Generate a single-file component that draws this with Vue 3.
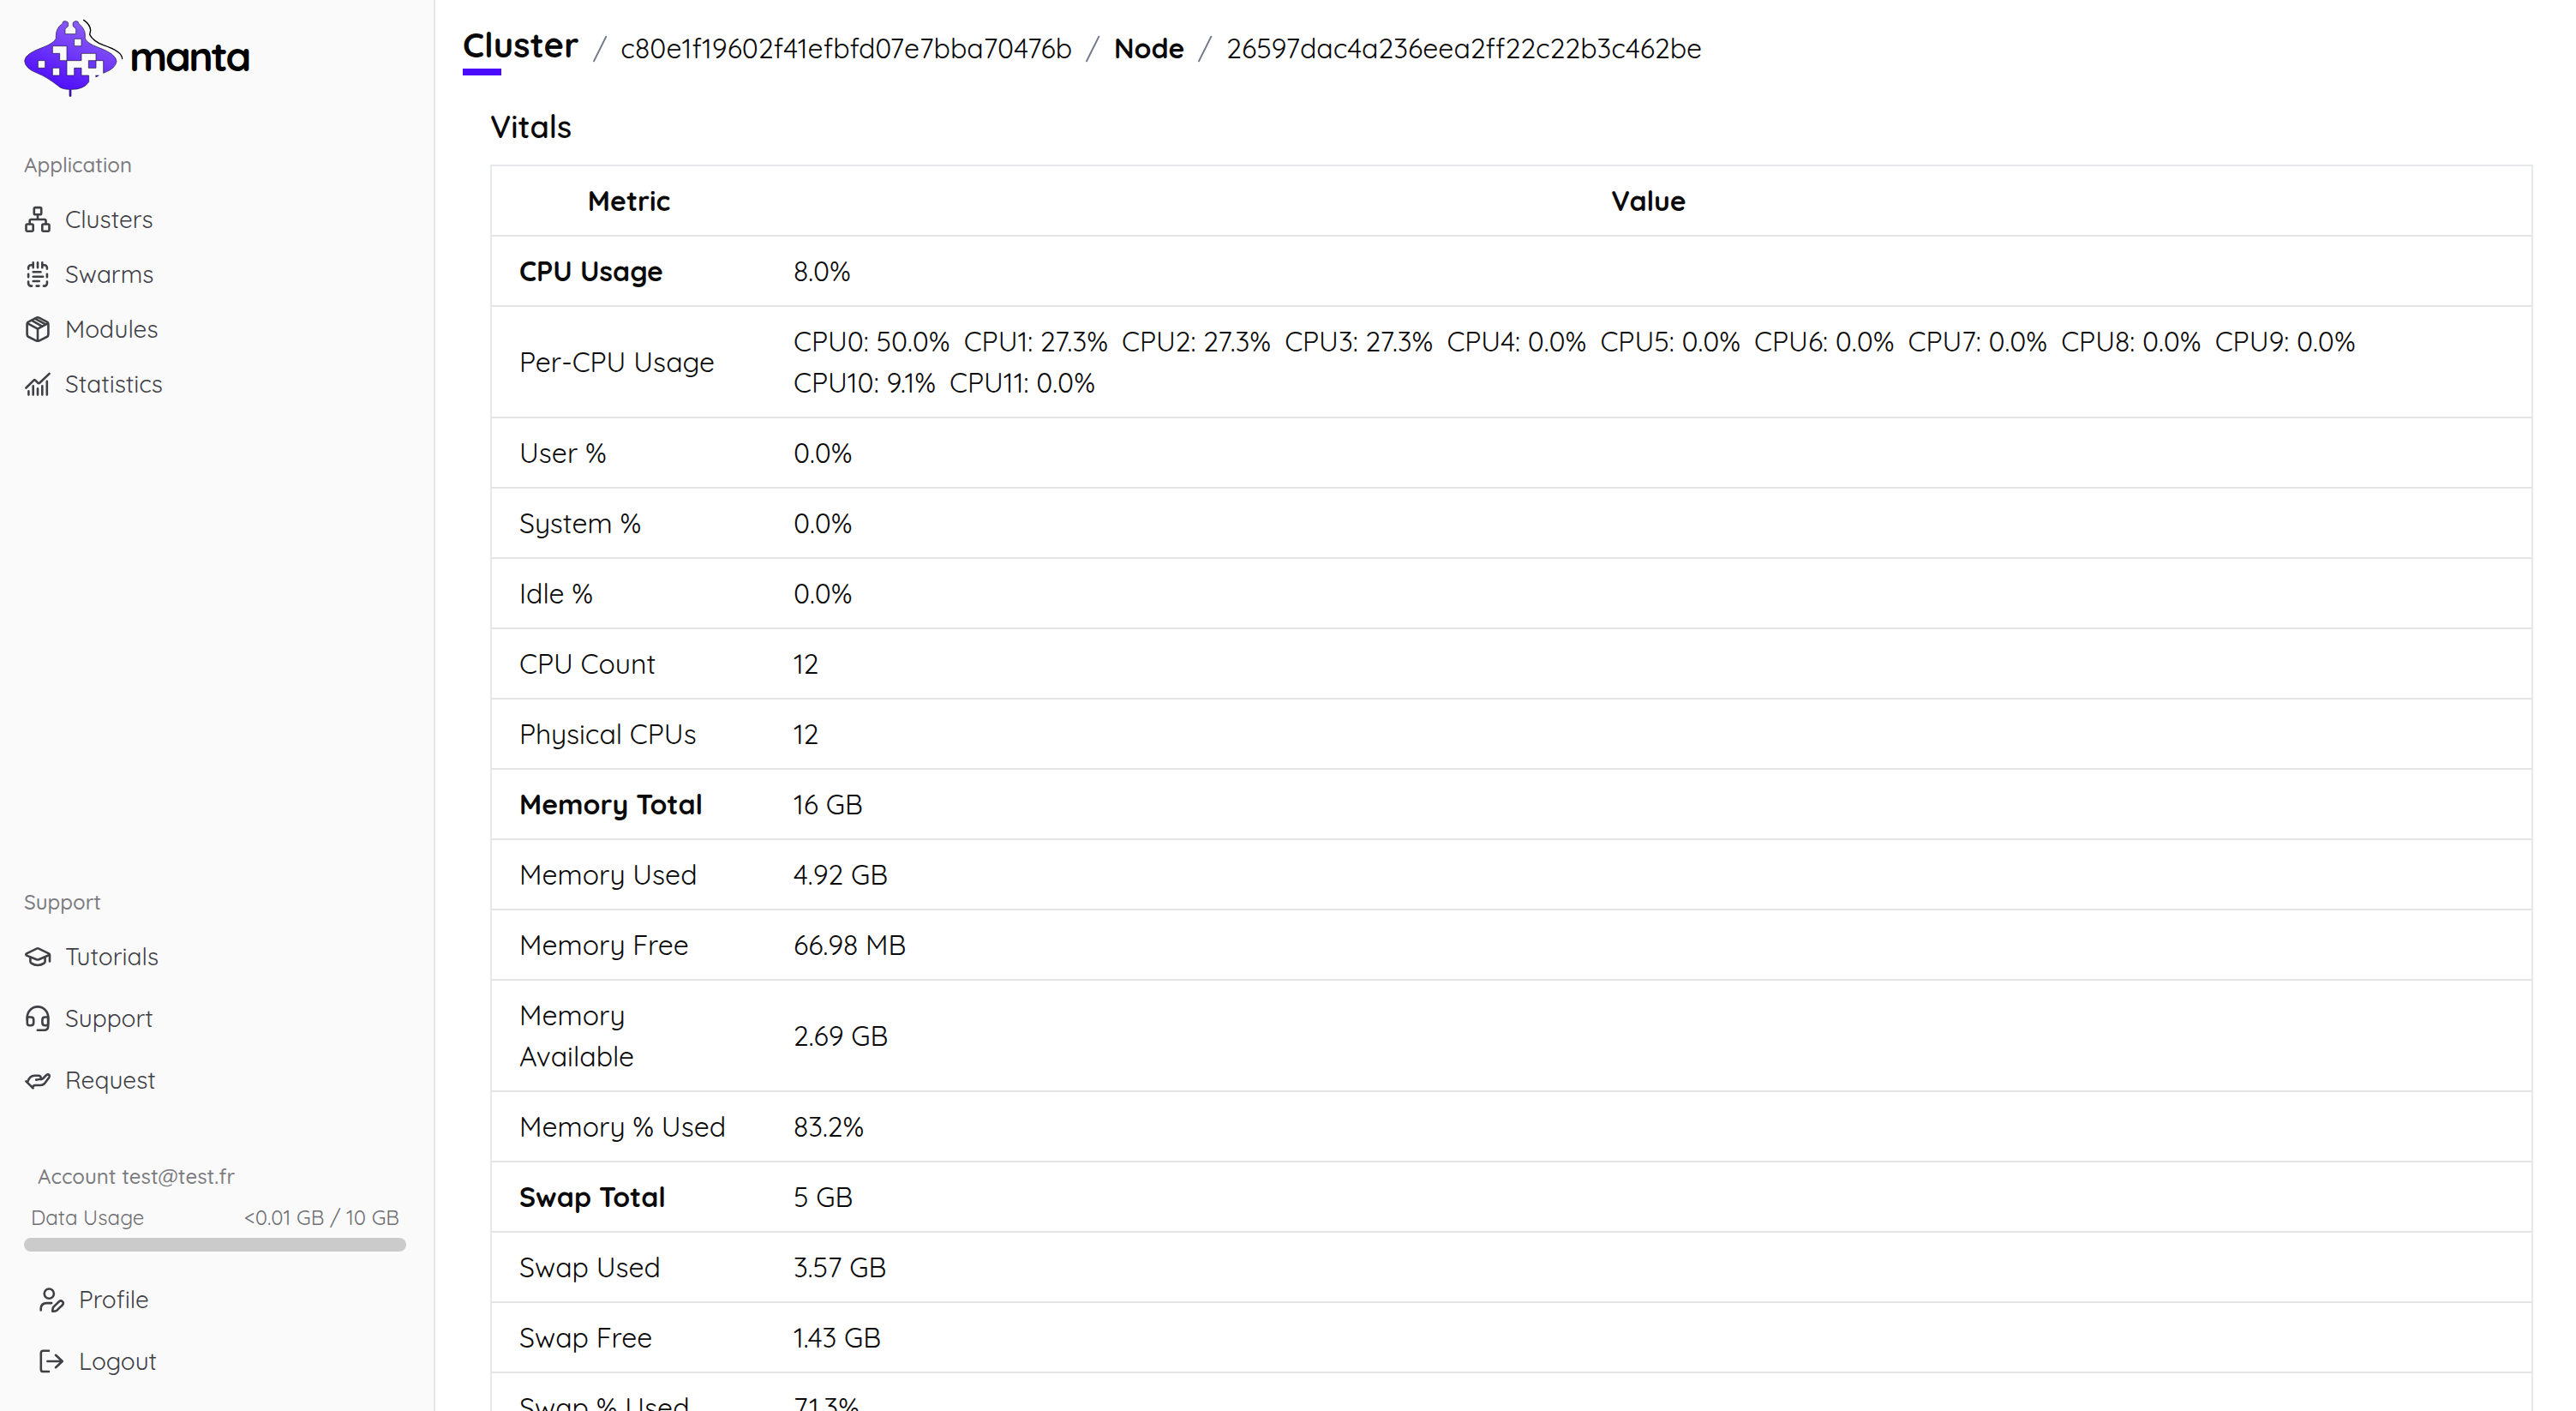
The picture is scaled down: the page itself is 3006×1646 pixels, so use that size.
<script setup>
import {ref, computed} from 'vue'

const clusterId = ref('c80e1f19602f41efbfd07e7bba70476b')
const nodeId = ref('26597dac4a236eea2ff22c22b3c462be')

// every icon is a list of stroked paths on a 32x32 grid
const icons =
{
  clusters: [
    'M13.2 2.1h5.6a1.4 1.4 0 0 1 1.4 1.4v5.4a1.4 1.4 0 0 1-1.4 1.4h-5.6a1.4 1.4 0 0 1-1.4-1.4V3.5a1.4 1.4 0 0 1 1.4-1.4z',
    'M3.9 21.5h5.4a1.4 1.4 0 0 1 1.4 1.4v5.4a1.4 1.4 0 0 1-1.4 1.4H3.9a1.4 1.4 0 0 1-1.4-1.4v-5.4a1.4 1.4 0 0 1 1.4-1.4z',
    'M22.7 21.5h5.4a1.4 1.4 0 0 1 1.4 1.4v5.4a1.4 1.4 0 0 1-1.4 1.4h-5.4a1.4 1.4 0 0 1-1.4-1.4v-5.4a1.4 1.4 0 0 1 1.4-1.4z',
    'M16 10.5V16M6.7 21v-3.6A1.4 1.4 0 0 1 8.1 16h16a1.4 1.4 0 0 1 1.4 1.4V21'
  ],
  swarms: [
    'M10.7 2.3v6M16 2.3v6M21.3 2.3v6',
    'M5.1 9.6V8.2a3 3 0 0 1 3-3h2.4M21.5 5.2h2.4a3 3 0 0 1 3 3v1.4',
    'M5.1 15.8v3.4M26.9 15.8v3.4',
    'M5.1 24.6v2a3 3 0 0 0 3 3h1M26.9 24.6v2a3 3 0 0 1-3 3h-1M14.6 29.6h2.8',
    'M10.7 13.2h8.8M10.7 18.7h11.4M10.7 24h7'
  ],
  modules: [
    'M16 2.3 Q17 2.3 18 2.9L26.6 7.4Q28.4 8.4 28.4 10V22.4Q28.4 24 26.6 25L18 29.3Q16 30.3 14 29.3L5.4 25Q3.6 24 3.6 22.4V10Q3.6 8.4 5.4 7.4L14 2.9Q15 2.3 16 2.3z',
    'M4 9.2l12 6.4 12-6.4M16 15.6V29.8',
    'M9.2 5.9l11.4 6.4M13.2 3.8l11.6 6.4'
  ],
  statistics: [
    'M2.4 20.5L11.4 11.6Q12.3 10.8 13.2 11.6L16.4 14.8Q17.3 15.6 18.2 14.8L29.6 3.9',
    'M5.4 24.4v4M10.7 18.3v10.1M16 21.4v7M21.3 18.3v10.1M26.8 12.8v15.6'
  ],
  tutorials: [
    'M3 12.3L14.8 6.6Q16 6 17.2 6.6L29 12.3Q30.6 13.2 29 14.2L17.4 19.2Q16 19.8 14.6 19.2L3 14.6Q1.6 13.3 3 12.3z',
    'M30 14v7.4',
    'M7.4 16.8v4.6Q7.4 22.8 8.6 23.6Q12 26 16 26T23.4 23.6Q24.6 22.8 24.6 21.4V16.8'
  ],
  support: [
    'M3.8 17.5V14.6A12.2 12.2 0 0 1 28.2 14.6V25Q28.2 29.7 23.4 29.7H15.8',
    'M3.8 14.5H8Q11.2 14.5 11.2 17.6V21Q11.2 24.2 8 24.2H6.4Q3.8 24.2 3.8 21.4z',
    'M28.2 14.5H24.6Q21.4 14.5 21.4 17.6V21Q21.4 24.2 24.6 24.2H25.6Q28.2 24.2 28.2 21.4z'
  ],
  request: [
    'M2.4 17.3L10.6 25.4',
    'M4.4 17.6Q6.6 11 12.4 10.8H16.6Q20.2 11 19.6 13.6Q19 15.4 14.2 15.6',
    'M19.6 15.2Q21.8 15.2 24.2 12L26.6 9.8Q28 8.8 29.4 10Q30.4 11.4 29.4 12.8L24 20Q22 22 19 22H13Q10.6 22.2 9.8 24.6'
  ],
  profile: [
    'M13.3 3.5a5.6 5.6 0 1 1 0 11.2 5.6 5.6 0 1 1 0-11.2z',
    'M3.7 28.4V26.6Q3.9 20.2 10.6 20.1H16.2',
    'M17.3 29.8Q17 26.4 18.6 24.4L25 18.2Q27 16.6 29 18.4Q30.6 20.2 29 22.2L22.6 28.4Q20.6 30 17.3 29.8z'
  ],
  logout: [
    'M13 3.7H6.4Q3.8 3.7 3.8 6.3V25.4Q3.8 28 6.4 28H13',
    'M11.4 16H28.6M21 8.8L28.8 16L21 23.2'
  ]
}

const appLinks = ref
([
  {name: 'Clusters', icon: 'clusters'},
  {name: 'Swarms', icon: 'swarms'},
  {name: 'Modules', icon: 'modules'},
  {name: 'Statistics', icon: 'statistics'}
])

const supportLinks = ref
([
  {name: 'Tutorials', icon: 'tutorials'},
  {name: 'Support', icon: 'support'},
  {name: 'Request', icon: 'request'}
])

const accountLinks = ref
([
  {name: 'Profile', icon: 'profile'},
  {name: 'Logout', icon: 'logout'}
])

const perCpu = ref([50.0, 27.3, 27.3, 27.3, 0, 0, 0, 0, 0, 0, 9.1, 0])

const cpuList = computed(() => perCpu.value.map((usage, i) => `CPU${i}: ${usage.toFixed(1)}%`))

const vitals = ref
([
  {metric: 'CPU Usage', value: '8.0%', main: true},
  {metric: 'Per-CPU Usage', perCpu: true},
  {metric: 'User %', value: '0.0%'},
  {metric: 'System %', value: '0.0%'},
  {metric: 'Idle %', value: '0.0%'},
  {metric: 'CPU Count', value: '12'},
  {metric: 'Physical CPUs', value: '12'},
  {metric: 'Memory Total', value: '16 GB', main: true},
  {metric: 'Memory Used', value: '4.92 GB'},
  {metric: 'Memory Free', value: '66.98 MB'},
  {metric: 'Memory Available', value: '2.69 GB'},
  {metric: 'Memory % Used', value: '83.2%'},
  {metric: 'Swap Total', value: '5 GB', main: true},
  {metric: 'Swap Used', value: '3.57 GB'},
  {metric: 'Swap Free', value: '1.43 GB'},
  {metric: 'Swap % Used', value: '71.3%'}
])
</script>

<template>
  <div class="layout">
    <aside class="sidebar">
      <div class="brand">
        <svg class="brand-mark" viewBox="84 66 348 276">
          <defs>
            <linearGradient id="manta-fill" x1="0.75" y1="0.1" x2="0.35" y2="0.95">
              <stop offset="0" stop-color="#8b5cf6" />
              <stop offset="1" stop-color="#4a08fa" />
            </linearGradient>
          </defs>
          <path
            class="manta-body"
            fill="url(#manta-fill)"
            fill-rule="evenodd"
            d="M228 119V103Q228 98 233 97Q240 93 239 86A10.500 10.500 0 0 0 218 83Q196 98 196 125V135Q188 151 152 165Q86 188 86 214Q88 240 130 256Q162 268 203 300Q216 313 243 313V337H249V313Q292 314 311 287V264H285V238H260V264H234V212H285V187H336V212H362V256Q406 240 408 214Q406 188 342 165Q304 151 298 135V120Q296 98 276 83A10.500 10.500 0 0 0 255 86Q254 93 261 97Q266 98 266 103V119z
            M184 161H234V212H209V187H184z M260 136H285V161H260z M133 212H158V238H133z M184 238H209V264H184z"
          />
          <path class="manta-body" fill="#6a38f8" d="M310 212H336V238H310z" />
          <path fill="#2c1080" d="M334 263H348L342 268L335 271z" />
          <path class="manta-line" d="M293 70Q316 86 317 106L314 121Q326 144 362 158Q428 180 428 206" />
        </svg>
        <span class="brand-name">manta</span>
      </div>

      <div class="group-label">Application</div>
      <nav class="nav">
        <a v-for="link in appLinks" :key="link.name" class="nav-link">
          <svg class="icon" viewBox="0 0 32 32"><path v-for="d in icons[link.icon]" :key="d" :d="d" /></svg>
          <span class="nav-text">{{ link.name }}</span>
        </a>
      </nav>

      <div class="group-label bottom">Support</div>
      <nav class="nav loose">
        <a v-for="link in supportLinks" :key="link.name" class="nav-link">
          <svg class="icon" viewBox="0 0 32 32"><path v-for="d in icons[link.icon]" :key="d" :d="d" /></svg>
          <span class="nav-text">{{ link.name }}</span>
        </a>
      </nav>

      <div class="account">Account test@test.fr</div>
      <div class="usage">
        <span>Data Usage</span>
        <span>&lt;0.01 GB / 10 GB</span>
      </div>
      <div class="usage-bar"></div>
      <nav class="nav loose indented">
        <a v-for="link in accountLinks" :key="link.name" class="nav-link">
          <svg class="icon" viewBox="0 0 32 32"><path v-for="d in icons[link.icon]" :key="d" :d="d" /></svg>
          <span class="nav-text">{{ link.name }}</span>
        </a>
      </nav>
    </aside>

    <main class="content">
      <div class="breadcrumb">
        <span class="crumb-title">Cluster</span>
        <svg class="slash" viewBox="0 0 17 32"><path d="M1 30.500L15.500 1.500" /></svg>
        <span>{{ clusterId }}</span>
        <svg class="slash" viewBox="0 0 17 32"><path d="M1 30.500L15.500 1.500" /></svg>
        <span class="crumb-node">Node</span>
        <svg class="slash" viewBox="0 0 17 32"><path d="M1 30.500L15.500 1.500" /></svg>
        <span>{{ nodeId }}</span>
      </div>
      <div class="title-bar"></div>

      <section class="vitals">
        <h2>Vitals</h2>
        <table>
          <thead>
            <tr>
              <th class="metric-col">Metric</th>
              <th>Value</th>
            </tr>
          </thead>
          <tbody>
            <tr v-for="row in vitals" :key="row.metric">
              <td :class="{main: row.main}">{{ row.metric }}</td>
              <td v-if="row.perCpu">
                <div class="cpu-list">
                  <span v-for="cpu in cpuList" :key="cpu">{{ cpu }}</span>
                </div>
              </td>
              <td v-else>{{ row.value }}</td>
            </tr>
          </tbody>
        </table>
      </section>
    </main>
  </div>
</template>

<style>
body {
    overflow: hidden;
    background-color: #fff;
}
</style>

<style scoped>
.layout {
    display: flex;
    height: 1646px;
    overflow: hidden;
    font-family: Quicksand, Inter, "Open Sans", sans-serif;
    font-weight: 400;
    color: #0a0a0a;
}

.sidebar {
    display: flex;
    flex-direction: column;
    box-sizing: border-box;
    width: 508px;
    flex-shrink: 0;
    padding: 22px 32px 22px 28px;
    background-color: #fafafa;
    border-right: 2px solid #e5e5e5;
    color: #3f3f46;
}

.brand {
    display: flex;
    align-items: center;
    height: 92px;
}

.brand-mark {
    width: 116px;
    height: 92px;
}

.manta-body {
    stroke: #1c1440;
    stroke-width: 2;
}

.manta-line {
    fill: none;
    stroke: #000;
    stroke-width: 4;
    stroke-linecap: round;
}

.brand-name {
    margin: -6px 0 0 7px;
    line-height: 60px;
    font-size: 48px;
    font-weight: 700;
    letter-spacing: -2.6px;
    color: #000;
}

.group-label {
    margin-top: 62px;
    height: 32px;
    line-height: 32px;
    font-size: 24px;
    font-weight: 500;
    color: #7c7c80;
}

.group-label.bottom {
    margin-top: auto;
}

.nav {
    display: flex;
    flex-direction: column;
    margin-top: 16px;
}

.nav-link {
    display: flex;
    align-items: center;
    gap: 16px;
    height: 64px;
    font-size: 28px;
}

.nav-text {
    margin-top: -1px;
}

.nav.loose .nav-link {
    height: 72px;
}

.nav.loose {
    margin-top: 12px;
}

.icon {
    width: 32px;
    height: 32px;
    fill: none;
    stroke: #3f3f46;
    stroke-width: 2.6;
    stroke-linecap: round;
    stroke-linejoin: round;
}

.account {
    margin: 60px 0 0 16px;
    height: 32px;
    line-height: 32px;
    font-size: 24px;
    font-weight: 500;
    color: #7c7c80;
}

.usage {
    display: flex;
    justify-content: space-between;
    margin-top: 16px;
    padding: 0 8px;
    height: 32px;
    line-height: 32px;
    font-size: 24px;
    color: #6f6f73;
}

.usage-bar {
    margin-top: 8px;
    height: 16px;
    flex-shrink: 0;
    border-radius: 8px;
    background-color: #cbcbcb;
}

.nav.indented {
    margin: 20px 0 0 16px;
}

.content {
    flex: 1;
    padding: 32px 50px 0 32px;
}

.breadcrumb {
    display: flex;
    align-items: center;
    gap: 16px;
    height: 48px;
    font-size: 32px;
}

.crumb-title {
    margin-top: -8px;
    font-size: 40px;
    font-weight: 700;
}

.crumb-node {
    font-weight: 700;
}

.slash {
    width: 16.8px;
    height: 32px;
    margin-top: 2px;
    fill: none;
    stroke: #71788a;
    stroke-width: 2;
    stroke-linecap: round;
}

.title-bar {
    width: 45px;
    height: 8px;
    background-color: #4b0bfb;
}

.vitals {
    padding-left: 32px;
}

h2 {
    margin: 36px 0 20px;
    height: 48px;
    line-height: 48px;
    font-size: 36px;
    font-weight: 600;
}

table {
    width: 100%;
    table-layout: fixed;
    border-spacing: 0;
    border: 2px solid #e5e7eb;
}

.metric-col {
    box-sizing: border-box;
    width: 320px;
}

th, td {
    padding: 16px 32px;
    border-bottom: 2px solid #e5e5e5;
    line-height: 48px;
    font-size: 32px;
    font-weight: 400;
    text-align: left;
}

th {
    font-weight: 700;
    text-align: center;
}

td.main {
    font-weight: 700;
}

.cpu-list {
    display: flex;
    flex-wrap: wrap;
    column-gap: 16px;
    width: 1900px;
}
</style>
